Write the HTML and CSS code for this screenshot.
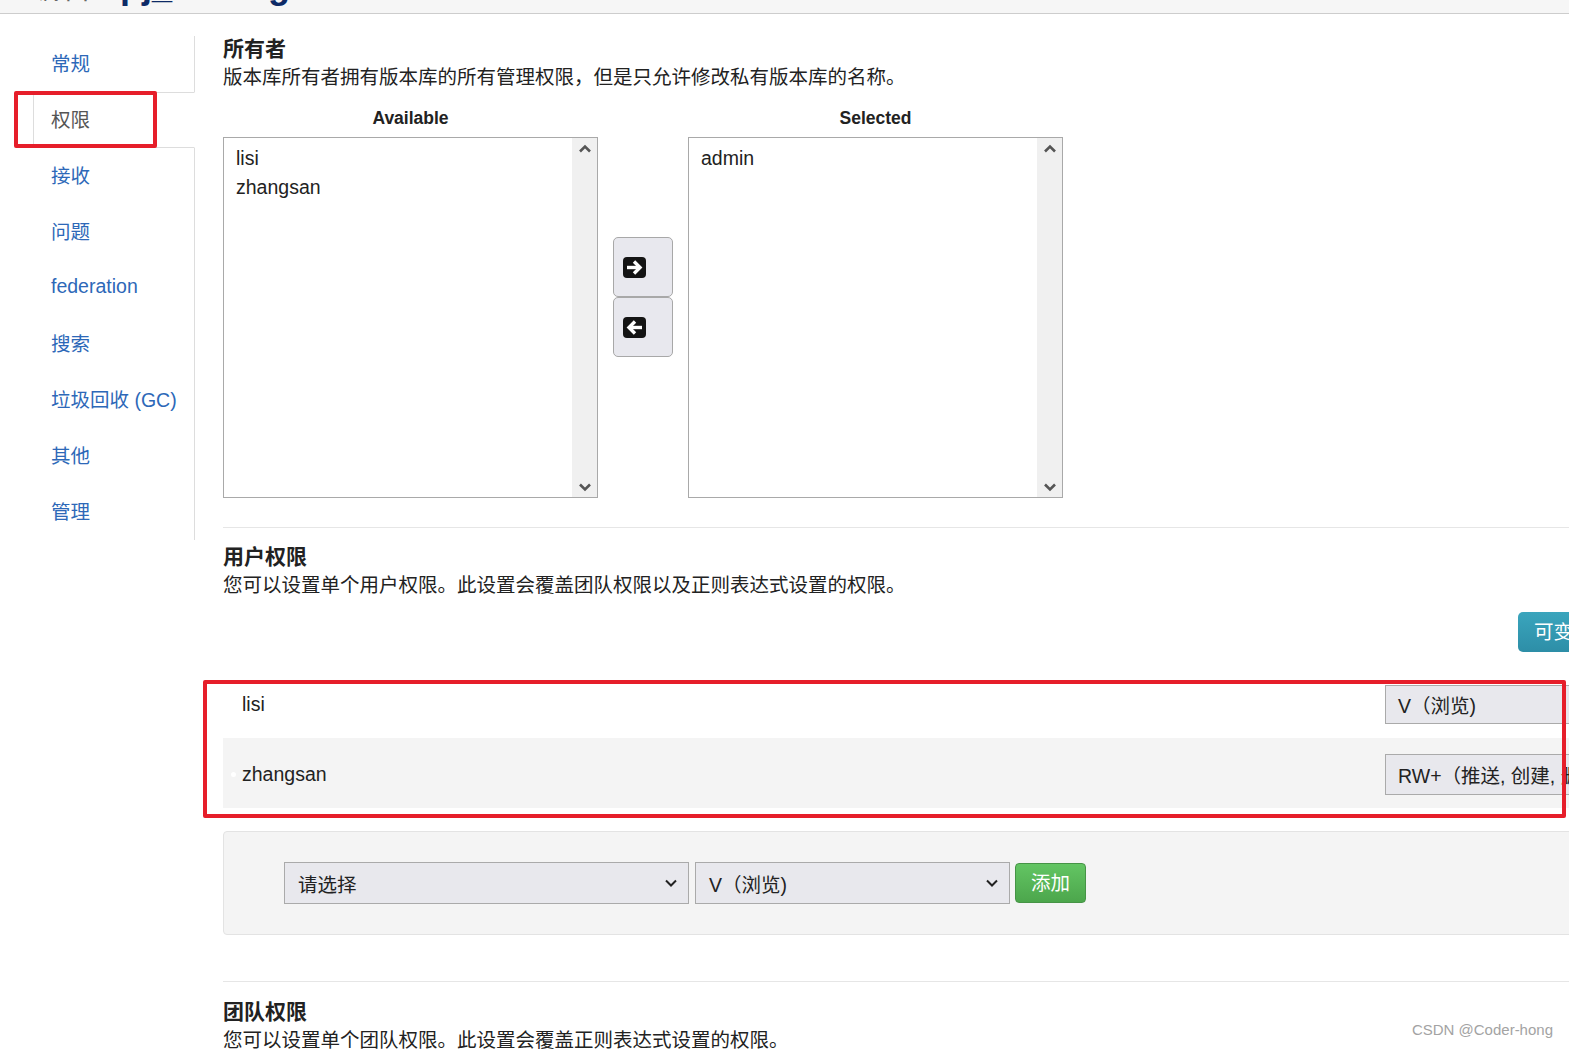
FILE: index.html
```html
<!DOCTYPE html>
<html lang="zh">
<head>
<meta charset="utf-8">
<title>权限</title>
<link rel="stylesheet" href="styles.css">
</head>
<body>
<header class="topbar">
  <div class="topbar-inner">
    <span class="crumb">编辑</span>
    <span class="repo">pj_testing</span>
  </div>
</header>

<div class="layout">
  <nav class="side">
    <ul class="tabs">
      <li>常规</li>
      <li class="active">权限</li>
      <li>接收</li>
      <li>问题</li>
      <li>federation</li>
      <li>搜索</li>
      <li>垃圾回收 (GC)</li>
      <li>其他</li>
      <li>管理</li>
    </ul>
  </nav>

  <main class="main">
    <section>
      <h3 class="sec-title first">所有者</h3>
      <p class="sec-desc">版本库所有者拥有版本库的所有管理权限，但是只允许修改私有版本库的名称。</p>

      <div class="dual">
        <div class="dual-col">
          <div class="dual-label">Available</div>
          <div class="listbox">
            <div class="list-items">
              <div>lisi</div>
              <div>zhangsan</div>
            </div>
            <div class="scrollbar">
              <svg class="chev" width="14" height="9" viewBox="0 0 14 9"><path d="M2 7.5 L7 2.5 L12 7.5" fill="none" stroke="#555" stroke-width="2.6"/></svg>
              <svg class="chev" width="14" height="9" viewBox="0 0 14 9"><path d="M2 1.5 L7 6.5 L12 1.5" fill="none" stroke="#555" stroke-width="2.6"/></svg>
            </div>
          </div>
        </div>

        <div class="move-btns">
          <div class="move-btn">
            <svg width="23" height="21" viewBox="0 0 23 21"><rect x="0" y="0" width="23" height="21" rx="4" fill="#141414"/><path d="M4 10.5 H16" stroke="#fff" stroke-width="3.4"/><path d="M11 4.5 L17 10.5 L11 16.5" fill="none" stroke="#fff" stroke-width="3.4"/></svg>
          </div>
          <div class="move-btn">
            <svg width="23" height="21" viewBox="0 0 23 21"><rect x="0" y="0" width="23" height="21" rx="4" fill="#141414"/><path d="M19 10.5 H7" stroke="#fff" stroke-width="3.4"/><path d="M12 4.5 L6 10.5 L12 16.5" fill="none" stroke="#fff" stroke-width="3.4"/></svg>
          </div>
        </div>

        <div class="dual-col">
          <div class="dual-label">Selected</div>
          <div class="listbox">
            <div class="list-items">
              <div>admin</div>
            </div>
            <div class="scrollbar">
              <svg class="chev" width="14" height="9" viewBox="0 0 14 9"><path d="M2 7.5 L7 2.5 L12 7.5" fill="none" stroke="#555" stroke-width="2.6"/></svg>
              <svg class="chev" width="14" height="9" viewBox="0 0 14 9"><path d="M2 1.5 L7 6.5 L12 1.5" fill="none" stroke="#555" stroke-width="2.6"/></svg>
            </div>
          </div>
        </div>
      </div>
    </section>

    <hr class="rule rule-1">

    <section>
      <h3 class="sec-title">用户权限</h3>
      <p class="sec-desc">您可以设置单个用户权限。此设置会覆盖团队权限以及正则表达式设置的权限。</p>

      <div class="toolbar">
        <div class="btn-info">可变更权限</div>
      </div>

      <div class="perm-list">
        <div class="perm-row">
          <span class="perm-name">lisi</span>
          <div class="fake-select row-select">V（浏览)</div>
        </div>
        <div class="perm-row alt">
          <span class="dot"></span>
          <span class="perm-name">zhangsan</span>
          <div class="fake-select row-select tall">RW+（推送, 创建, 删除, 强制推送)</div>
        </div>
      </div>

      <div class="well">
        <div class="fake-select sel-user">
          <span>请选择</span>
          <svg width="14" height="9" viewBox="0 0 14 9"><path d="M2 1.5 L7 6.5 L12 1.5" fill="none" stroke="#222" stroke-width="2"/></svg>
        </div>
        <div class="fake-select sel-perm">
          <span>V（浏览)</span>
          <svg width="14" height="9" viewBox="0 0 14 9"><path d="M2 1.5 L7 6.5 L12 1.5" fill="none" stroke="#222" stroke-width="2"/></svg>
        </div>
        <div class="btn-success">添加</div>
      </div>
    </section>

    <hr class="rule rule-2">

    <section>
      <h3 class="sec-title team">团队权限</h3>
      <p class="sec-desc">您可以设置单个团队权限。此设置会覆盖正则表达式设置的权限。</p>
    </section>
  </main>
</div>

<div class="mark mark-tab"></div>
<div class="mark mark-rows"></div>
<div class="watermark">CSDN @Coder-hong</div>
</body>
</html>
```

FILE: styles.css
```css
html, body {
  margin: 0;
  padding: 0;
  overflow: hidden;
}

body {
  width: 1569px;
  height: 1049px;
  position: relative;
  background: #fff;
  color: #222;
  font-family: "Liberation Sans", "Noto Sans CJK SC", sans-serif;
}

/* top bar (clipped title) */
.topbar {
  height: 13px;
  background: #f6f6f6;
  border-bottom: 1px solid #cdcdcd;
  overflow: hidden;
}

.topbar-inner {
  display: flex;
  align-items: baseline;
  height: 40px;
  line-height: 40px;
  margin-top: -34px;
  padding-left: 30px;
  gap: 30px;
}

.crumb {
  font-size: 30px;
  color: #666;
}

.repo {
  font-size: 36px;
  font-weight: bold;
  color: #0d2a66;
}

/* layout */
.layout {
  display: flex;
  align-items: flex-start;
}

.side {
  width: 195px;
  flex: none;
  padding-top: 22px;
}

.tabs {
  list-style: none;
  margin: 0;
  padding: 0;
  border-right: 1px solid #ddd;
}

.tabs li {
  height: 56px;
  display: flex;
  align-items: center;
  padding-left: 51px;
  padding-bottom: 4px;
  box-sizing: border-box;
  font-size: 19.5px;
  color: #2d68b8;
}

.tabs li.active {
  height: 56px;
  margin-left: 33px;
  margin-right: -1px;
  padding-left: 17px;
  border: 1px solid #ddd;
  border-right-color: #fff;
  border-radius: 4px 0 0 4px;
  color: #555;
}

.main {
  flex: none;
  width: 1400px;
  padding-left: 28px;
}

.sec-title {
  margin: 17px 0 0;
  font-size: 21px;
  line-height: 24px;
  font-weight: bold;
  color: #222;
}

.sec-title.first {
  margin-top: 23px;
}

.sec-title.team {
  margin-top: 18px;
}

.sec-desc {
  margin: 1px 0 0;
  font-size: 19.5px;
  line-height: 30px;
  color: #222;
}

/* dual list */
.dual {
  display: flex;
  align-items: flex-start;
  margin-top: 15px;
}

.dual-col {
  width: 375px;
  flex: none;
}

.dual-label {
  text-align: center;
  font-size: 17.5px;
  line-height: 22px;
  font-weight: bold;
  margin-bottom: 8px;
}

.listbox {
  height: 361px;
  box-sizing: border-box;
  border: 1px solid #a9a9a9;
  display: flex;
}

.list-items {
  flex: 1;
  padding: 6px 12px;
  font-size: 19.5px;
  line-height: 29px;
}

.scrollbar {
  width: 25px;
  flex: none;
  background: #f0f0f0;
  display: flex;
  flex-direction: column;
  justify-content: space-between;
  align-items: center;
  padding: 6px 0 5px;
}

.move-btns {
  width: 60px;
  flex: none;
  margin: 130px 15px 0;
}

.move-btn {
  height: 60px;
  box-sizing: border-box;
  border: 1px solid #a8a8a8;
  border-radius: 5px;
  background: #e8e8ee;
  display: flex;
  align-items: center;
  padding-left: 9px;
}

.rule {
  border: 0;
  border-top: 1px solid #e6e6e6;
  margin: 0;
}

.rule-1 {
  margin-top: 29px;
}

.rule-2 {
  margin-top: 46px;
}

/* user permissions */
.toolbar {
  display: flex;
  margin-top: 12px;
}

.btn-info {
  margin-left: auto;
  width: 105px;
  height: 40px;
  box-sizing: border-box;
  padding-left: 16px;
  line-height: 40px;
  white-space: nowrap;
  overflow: hidden;
  border-radius: 5px 0 0 5px;
  background: linear-gradient(#3aa5bd, #2d8ea7);
  color: #fff;
  font-size: 19.5px;
}

.perm-list {
  margin-top: 18px;
}

.perm-row {
  display: flex;
  align-items: center;
  height: 68px;
  padding-left: 19px;
}

.perm-row.alt {
  height: 70px;
  background: #f4f4f4;
  padding-top: 3px;
  box-sizing: border-box;
}

.dot {
  width: 5px;
  height: 5px;
  border-radius: 50%;
  background: #fff;
  margin-left: -11px;
  margin-right: 6px;
}

.perm-name {
  flex: 1;
  font-size: 19.5px;
}

.fake-select {
  box-sizing: border-box;
  border: 1px solid #aaa;
  background: #e8e8ed;
  font-size: 19.5px;
  color: #222;
  white-space: nowrap;
  overflow: hidden;
  display: flex;
  align-items: center;
}

.row-select {
  width: 238px;
  height: 39px;
  padding-left: 12px;
  margin-top: 1px;
}

.row-select.tall {
  height: 41px;
  margin-top: 0;
}

/* add form */
.well {
  margin-top: 23px;
  height: 104px;
  box-sizing: border-box;
  background: #f4f4f4;
  border: 1px solid #e3e3e3;
  border-radius: 4px;
  display: flex;
  align-items: center;
  padding-left: 60px;
}

.sel-user,
.sel-perm {
  height: 42px;
  justify-content: space-between;
  padding: 0 10px 0 13px;
}

.sel-user {
  width: 405px;
}

.sel-perm {
  width: 315px;
  margin-left: 6px;
}

.btn-success {
  width: 71px;
  height: 40px;
  box-sizing: border-box;
  margin-left: 5px;
  border: 1px solid #469446;
  border-radius: 4px;
  background: linear-gradient(#63c563, #4ca64c);
  color: #fff;
  font-size: 19.5px;
  line-height: 38px;
  text-align: center;
}

/* annotations */
.mark {
  position: absolute;
  border: 4px solid #e61e2a;
  border-radius: 2px;
  box-sizing: border-box;
  pointer-events: none;
}

.mark-tab {
  left: 14px;
  top: 91px;
  width: 143px;
  height: 57px;
}

.mark-rows {
  left: 203px;
  top: 680px;
  width: 1363px;
  height: 138px;
}

.watermark {
  position: absolute;
  right: 16px;
  bottom: 11px;
  font-size: 15px;
  color: #a3a3a3;
}
```
